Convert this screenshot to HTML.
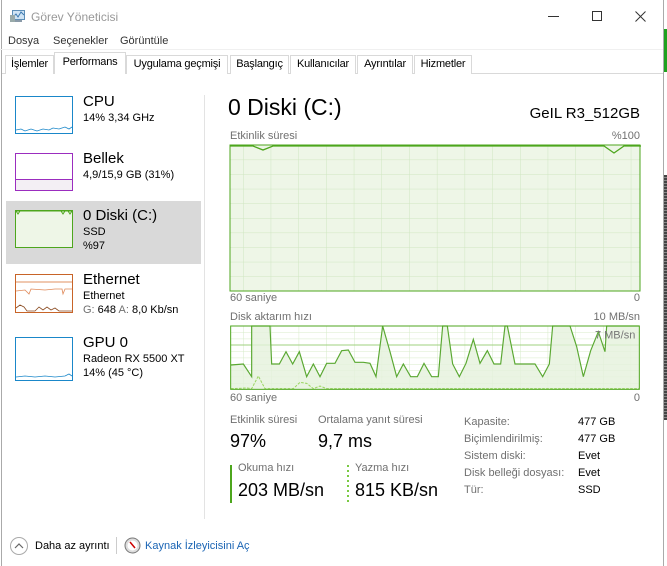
<!DOCTYPE html>
<html><head><meta charset="utf-8"><style>
*{margin:0;padding:0;box-sizing:border-box}
body{width:667px;height:566px;overflow:hidden;background:#fff;font-family:"Liberation Sans","DejaVu Sans",sans-serif;color:#000;position:relative}
.a{position:absolute;white-space:nowrap}
.g{color:#707070}
.s12{font-size:12px}
.s11{font-size:11px}
.tab{position:absolute;top:55px;height:19px;border:1px solid #d9d9d9;border-bottom:none;font-size:11px;padding:2px 0 0;text-align:center;background:#fff;white-space:nowrap;overflow:hidden;letter-spacing:-0.2px}
</style></head><body>
<div class="a" style="left:663px;top:0;width:4px;height:566px;background:#fff;border-left:1px solid #aaa"></div>
<div class="a" style="left:664px;top:29px;width:3px;height:43px;background:#1ea21e"></div>
<div class="a" style="left:664px;top:175px;width:3px;height:245px;background:repeating-linear-gradient(#444 0 2px,#888 2px 3px)"></div>
<div class="a" style="left:1px;top:0;width:1px;height:566px;background:#aaa"></div>

<svg class="a" style="left:9px;top:9px" width="17" height="15" viewBox="0 0 17 15"><rect x="3.5" y="1.5" width="12" height="9" fill="#cfe4f5" stroke="#5d8fb8"/><polyline points="4,8 7,5 9,8 12,3 15,6" fill="none" stroke="#3a78b0"/><rect x="1" y="6" width="5" height="7" fill="#9aa" /><rect x="6" y="11" width="7" height="2" fill="#8a9aa8"/></svg>
<div class="a s12 g" style="left:31px;top:10px;color:#999">Görev Yöneticisi</div>
<div class="a" style="left:548px;top:16px;width:11px;height:1px;background:#333"></div>
<div class="a" style="left:592px;top:11px;width:10px;height:10px;border:1px solid #333"></div>
<svg class="a" style="left:635px;top:11px" width="11" height="11"><path d="M0.5 0.5L10.5 10.5M10.5 0.5L0.5 10.5" stroke="#333"/></svg>
<div class="a s11" style="left:8px;top:35px;color:#333">Dosya</div>
<div class="a s11" style="left:53px;top:35px;color:#333">Seçenekler</div>
<div class="a s11" style="left:120px;top:35px;color:#333">Görüntüle</div>
<div class="a" style="left:0;top:49px;width:663px;height:1px;background:#f0f0f0"></div>
<div class="a" style="left:2px;top:73px;width:661px;height:1px;background:#d9d9d9"></div>
<div class="tab" style="left:5px;width:49px">İşlemler</div>
<div class="tab" style="left:54px;top:52px;height:22px;width:72px;padding-top:3px">Performans</div>
<div class="tab" style="left:126px;width:102px">Uygulama geçmişi</div>
<div class="tab" style="left:230px;width:59px">Başlangıç</div>
<div class="tab" style="left:290px;width:66px">Kullanıcılar</div>
<div class="tab" style="left:357px;width:56px">Ayrıntılar</div>
<div class="tab" style="left:414px;width:58px">Hizmetler</div>

<div class="a" style="left:6px;top:201px;width:195px;height:63px;background:#d9d9d9"></div>
<div class="a" style="left:204px;top:95px;width:1px;height:424px;background:#e3e3e3"></div>

<svg class="a" style="left:15px;top:96px" width="58" height="38"><rect x=".5" y=".5" width="57" height="37" fill="#fff" stroke="#1a87c9"/><polyline points="1,34 6,33 10,35 16,33 22,35 28,33 34,34 38,32 44,33 50,31 54,33 57,31" fill="none" stroke="#1a87c9" stroke-width=".8"/></svg>
<div class="a" style="left:83px;top:93px;font-size:15px">CPU</div>
<div class="a s11" style="left:83px;top:112px">14% 3,34 GHz</div>

<svg class="a" style="left:15px;top:153px" width="58" height="38"><rect x=".5" y=".5" width="57" height="37" fill="#fff" stroke="#9b2dbf"/><rect x="1" y="26" width="56" height="11" fill="#f3eff4"/><line x1="1" y1="26.5" x2="57" y2="26.5" stroke="#9b2dbf"/></svg>
<div class="a" style="left:83px;top:150px;font-size:15px">Bellek</div>
<div class="a s11" style="left:83px;top:169px">4,9/15,9 GB (31%)</div>

<svg class="a" style="left:15px;top:210px" width="58" height="38"><rect x=".5" y=".5" width="57" height="37" fill="#eef6e7" stroke="#4da61d"/><path d="M1,1h56M1,1l2,3 2,-3M46,1l2,3 2,-3M53,1l2,3 2,-3" stroke="#4da61d" fill="none"/></svg>
<div class="a" style="left:83px;top:207px;font-size:15px">0 Diski (C:)</div>
<div class="a s11" style="left:83px;top:226px">SSD</div>
<div class="a s11" style="left:83px;top:240px">%97</div>

<svg class="a" style="left:15px;top:274px" width="58" height="39"><rect x=".5" y=".5" width="57" height="38" fill="#fff" stroke="#c86428"/><line x1="1" y1="8" x2="57" y2="8" stroke="#f0c8b0" stroke-width="2"/><polyline points="1,17 10,16 14,20 16,15 30,16 40,15 47,15 48,20 50,15 57,15" fill="none" stroke="#e08a5a" stroke-width=".8"/><polyline points="1,34 5,31 9,33 12,37 20,37 24,33 28,36 32,33 36,36 40,34 44,37 57,37" fill="none" stroke="#8a4a20" stroke-width=".8"/></svg>
<div class="a" style="left:83px;top:271px;font-size:15px">Ethernet</div>
<div class="a s11" style="left:83px;top:290px">Ethernet</div>
<div class="a s11" style="left:83px;top:304px"><span class="g">G:</span> 648 <span class="g">A:</span> 8,0 Kb/sn</div>

<svg class="a" style="left:15px;top:337px" width="58" height="44"><rect x=".5" y=".5" width="57" height="43" fill="#fff" stroke="#1a87c9"/><polyline points="1,40 10,39 20,40 30,39 40,40 50,39 54,37 57,39" fill="none" stroke="#1a87c9" stroke-width=".8"/></svg>
<div class="a" style="left:83px;top:334px;font-size:15px">GPU 0</div>
<div class="a s11" style="left:83px;top:353px">Radeon RX 5500 XT</div>
<div class="a s11" style="left:83px;top:367px">14% (45 °C)</div>

<div class="a" style="left:228px;top:94px;font-size:23px">0 Diski (C:)</div>
<div class="a" style="right:27px;top:105px;font-size:15px">GeIL R3_512GB</div>
<div class="a s11 g" style="left:230px;top:130px">Etkinlik süresi</div>
<div class="a s11 g" style="right:27px;top:130px">%100</div>

<svg class="a" style="left:229px;top:144px" width="412" height="148">
<defs><pattern id="p1" x="14" y="1" width="27.7" height="14.6" patternUnits="userSpaceOnUse"><path d="M0 0V14.6M0 0H27.7" stroke="#cfe6c0" fill="none"/></pattern></defs>
<rect x="1" y="1" width="410" height="146" fill="#eef6e7"/><rect x="1" y="1" width="410" height="146" fill="url(#p1)"/>
<rect x="1" y="1" width="410" height="146" fill="none" stroke="#4da61d"/>
<path d="M1,2H24l10,4 10,-4H375l10,7 10,-7H412" fill="none" stroke="#4da61d" stroke-width="1.3"/>
</svg>
<div class="a s11 g" style="left:230px;top:292px">60 saniye</div>
<div class="a s11 g" style="right:27px;top:292px">0</div>

<div class="a s11 g" style="left:230px;top:311px">Disk aktarım hızı</div>
<div class="a s11 g" style="right:27px;top:311px">10 MB/sn</div>
<svg class="a" style="left:220px;top:300px" width="447" height="110" viewBox="0 0 1341 330">
<defs><pattern id="p2" x="70" y="78" width="83" height="19" patternUnits="userSpaceOnUse"><path d="M0 0V19M0 0H83" stroke="#d6ebc8" stroke-width="3" fill="none"/></pattern></defs>
<rect x="32" y="78" width="1226" height="190" fill="#fff"/>
<rect x="32" y="78" width="1226" height="190" fill="url(#p2)"/>
<line x1="32" y1="135" x2="1258" y2="135" stroke="#9fd07f" stroke-width="3"/>
<polygon points="33,268 33,195 70,192 95,230 95,78 150,78 155,192 178,192 198,155 218,192 238,155 260,230 280,192 300,230 320,190 345,190 365,152 385,150 405,187 430,187 450,190 468,230 488,78 510,155 530,230 550,192 572,230 592,230 612,190 635,230 655,230 668,78 682,78 698,192 718,230 738,190 760,118 780,190 802,152 822,192 842,192 855,78 862,78 885,192 945,192 968,230 988,192 998,78 1050,78 1070,140 1090,230 1112,152 1135,95 1155,155 1160,78 1258,78 1258,268" fill="#e5f1dc" fill-opacity=".8"/>
<polyline points="33,195 70,192 95,230 95,78 150,78 155,192 178,192 198,155 218,192 238,155 260,230 280,192 300,230 320,190 345,190 365,152 385,150 405,187 430,187 450,190 468,230 488,78 510,155 530,230 550,192 572,230 592,230 612,190 635,230 655,230 668,78 682,78 698,192 718,230 738,190 760,118 780,190 802,152 822,192 842,192 855,78 862,78 885,192 945,192 968,230 988,192 998,78 1050,78 1070,140 1090,230 1112,152 1135,95 1155,155 1160,78 1258,78" fill="none" stroke="#5aa832" stroke-width="3.5"/>
<polyline points="33,266 80,264 95,266 115,228 135,266 220,266 240,247 260,250 280,266 300,258 320,266 1258,266" fill="none" stroke="#9ad560" stroke-width="3" stroke-dasharray="8,4"/>
<rect x="32" y="78" width="1226" height="190" fill="none" stroke="#4da61d" stroke-width="3"/>
<text x="1246" y="116" text-anchor="end" font-size="33" fill="#777" font-family="Liberation Sans,sans-serif">7 MB/sn</text>
</svg>
<div class="a s11 g" style="left:230px;top:392px">60 saniye</div>
<div class="a s11 g" style="right:27px;top:392px">0</div>

<div class="a s11 g" style="left:230px;top:414px">Etkinlik süresi</div>
<div class="a" style="left:230px;top:431px;font-size:18px">97%</div>
<div class="a s11 g" style="left:318px;top:414px">Ortalama yanıt süresi</div>
<div class="a" style="left:318px;top:431px;font-size:18px">9,7 ms</div>
<div class="a" style="left:230px;top:465px;width:2px;height:38px;background:#4da61d"></div>
<div class="a s11 g" style="left:238px;top:462px">Okuma hızı</div>
<div class="a" style="left:238px;top:480px;font-size:18px">203 MB/sn</div>
<div class="a" style="left:347px;top:465px;width:2px;height:38px;background:repeating-linear-gradient(#7ac943 0 2px,transparent 2px 5px)"></div>
<div class="a s11 g" style="left:355px;top:462px">Yazma hızı</div>
<div class="a" style="left:355px;top:480px;font-size:18px">815 KB/sn</div>

<div class="a s11 g" style="left:464px;top:414px;line-height:17px">Kapasite:<br>Biçimlendirilmiş:<br>Sistem diski:<br>Disk belleği dosyası:<br>Tür:</div>
<div class="a s11" style="left:578px;top:414px;line-height:17px">477 GB<br>477 GB<br>Evet<br>Evet<br>SSD</div>

<svg class="a" style="left:9px;top:536px" width="20" height="20"><circle cx="10" cy="10" r="8.5" fill="#fff" stroke="#aaa"/><path d="M6 12L10 8 14 12" fill="none" stroke="#666" stroke-width="1.2"/></svg>
<div class="a s11" style="left:35px;top:540px">Daha az ayrıntı</div>
<div class="a" style="left:116px;top:537px;width:1px;height:17px;background:#ccc"></div>
<svg class="a" style="left:124px;top:537px" width="17" height="17"><circle cx="8.5" cy="8.5" r="7.5" fill="#ddd" stroke="#777"/><circle cx="8.5" cy="8.5" r="5" fill="#fff"/><path d="M6 5L11 11" stroke="#c00" stroke-width="1.5"/></svg>
<div class="a s11" style="left:145px;top:540px;color:#1a64b4">Kaynak İzleyicisini Aç</div>
</body></html>
